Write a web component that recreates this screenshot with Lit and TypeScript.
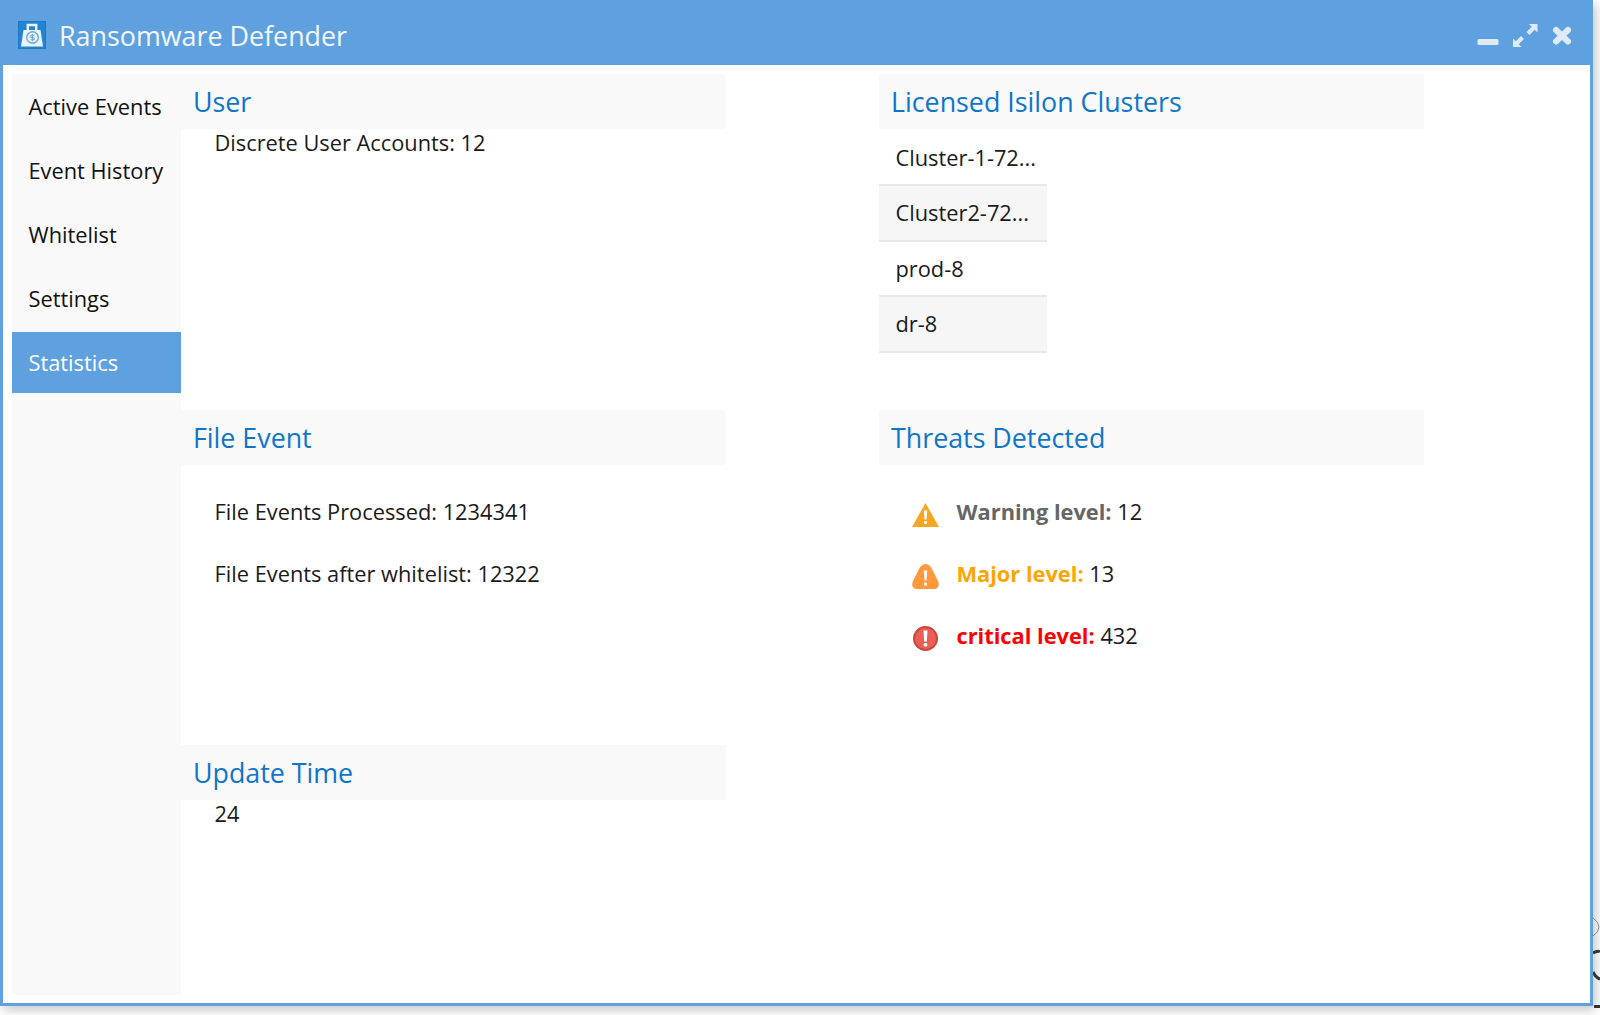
import { LitElement, html, css } from "lit";
import { customElement } from "lit/decorators.js";

@customElement("app-root")
export class AppRoot extends LitElement {
  static styles = css`
    :host { display: block; width: 1600px; height: 1015px; background: #fff; overflow: hidden; position: relative; font-family: "Open Sans", sans-serif; color: #1a1a1a; }
    * { box-sizing: border-box; }
    .window { width: 1593px; height: 1006px; border: 3px solid #5fa1df; border-top: 0; display: flex; flex-direction: column; background: #fff; box-shadow: 3px 4px 10px rgba(0,0,0,.22); }
    .titlebar { height: 65px; flex: none; margin: 0 -3px; background: #5fa1df; display: flex; align-items: center; padding: 5px 21px 0 18px; color: #fff; }
    .logo { width: 28px; height: 28px; display: block; }
    .title { margin: 2px 0 0 13px; font-size: 26.85px; color: #f2f7fc; line-height: 1; flex: 1; }
    .ctrls { display: flex; align-items: center; gap: 14px; }
    .ctrls svg { display: block; overflow: visible; }
    .body { flex: 1; display: flex; padding: 8.5px 0 8px 9px; min-height: 0; }
    .side { width: 169px; flex: none; background: #f9f9f9; padding-top: 2px; display: flex; flex-direction: column; gap: 3px; }
    .side div { height: 61px; padding: 1px 0 0 16.5px; display: flex; align-items: center; font-size: 21.8px; color: #111; }
    .side div.on { background: #5fa1df; color: #fff; }
    .grid { display: grid; grid-template-columns: 545px 545px; column-gap: 153px; grid-template-rows: 336px 335px 1fr; }
    .h { height: 55.5px; background: #f9f9f9; padding-left: 12px; font-size: 26.8px; line-height: 56.4px; color: #0f75c9; }
    .line { font-size: 21.8px; padding-left: 33.5px; color: #1a1a1a; line-height: 30px; }
    .top { margin-top: -1px; }
    .lines { padding-top: 32px; display: flex; flex-direction: column; gap: 32px; }
    .lines.threats { gap: 32.2px; }
    .clusters { width: 168px; padding-top: 1.5px; }
    .clusters div { height: 53.5px; padding-left: 16.5px; font-size: 21.8px; line-height: 54px; color: #1a1a1a; }
    .clusters div:nth-child(even) { height: 57.5px; background: #f6f6f6; border-top: 2px solid #e8e8e8; border-bottom: 2px solid #e8e8e8; line-height: 54px; }
    .threat { display: flex; align-items: center; height: 30px; padding-left: 32.5px; font-size: 21.8px; line-height: 30px; }
    .threat svg { width: 27px; height: 27px; margin-right: 18px; margin-top: 5px; flex: none; }
    .threat b { font-weight: 700; }
    .w { color: #666; } .m { color: #ffa500; } .c { color: #f00; }
    .edge { position: absolute; right: 0; top: 900px; }
  `;

  render() {
    const nav = ["Active Events", "Event History", "Whitelist", "Settings", "Statistics"];
    const clusters = ["Cluster-1-72...", "Cluster2-72...", "prod-8", "dr-8"];
    return html`
      <div class="window">
        <div class="titlebar">
          <svg class="logo" viewBox="0 0 28 28">
            <rect width="28" height="28" fill="#2584d0"/>
            <rect x=".5" y=".5" width="27" height="27" fill="none" stroke="#1a78c6"/>
            <path d="M5.5 9H22.5L25 25.5H3Z" fill="#eaf3fb"/>
            <path d="M9.8 10V4H18.2V10" fill="none" stroke="#eaf3fb" stroke-width="2.4"/>
            <circle cx="14.5" cy="16.5" r="5.8" fill="none" stroke="#6fa8d8" stroke-width="1.4"/>
            <path d="M16.5 14.3H13.6Q12.6 14.3 12.6 15.5Q12.6 16.5 14.5 16.5Q16.4 16.5 16.4 17.7Q16.4 18.8 15.2 18.8H12.5M14.5 13V20" fill="none" stroke="#6fa8d8" stroke-width="1.1"/>
          </svg>
          <div class="title">Ransomware Defender</div>
          <div class="ctrls">
            <svg width="22" height="24" viewBox="0 0 22 24"><rect x="0.5" y="16" width="21" height="6" rx="1.5" fill="#deebf7"/></svg>
            <svg width="25" height="24" viewBox="0 -1 25 24"><path d="M16 0H24.5V8.5L21.7 5.7L16.5 11L13.5 8L18.8 2.8ZM8.5 23H0V14.5L2.8 17.3L8 12L11 15L5.7 20.2Z" fill="#deebf7"/></svg>
            <svg width="20" height="20" viewBox="0 0 20 20"><path d="M4 5L16 16.5M16 5L4 16.5" stroke="#deebf7" stroke-width="6" stroke-linecap="round"/></svg>
          </div>
        </div>
        <div class="body">
          <div class="side">
            ${nav.map((n) => html`<div class=${n === "Statistics" ? "on" : ""}>${n}</div>`)}
          </div>
          <div class="grid">
            <section>
              <div class="h">User</div>
              <div class="line top">Discrete User Accounts: 12</div>
            </section>
            <section>
              <div class="h">Licensed Isilon Clusters</div>
              <div class="clusters">${clusters.map((c) => html`<div>${c}</div>`)}</div>
            </section>
            <section>
              <div class="h">File Event</div>
              <div class="lines">
                <div class="line">File Events Processed: 1234341</div>
                <div class="line">File Events after whitelist: 12322</div>
              </div>
            </section>
            <section>
              <div class="h">Threats Detected</div>
              <div class="lines threats">
                <div class="threat">
                  <svg viewBox="0 0 27 27"><path d="M13.5 2L27 26H0Z" fill="#f5a623"/><path d="M11.8 9.5H15.2L14.5 18.5H12.5Z" fill="#fff"/><rect x="12" y="20" width="3" height="3" rx="1" fill="#fff"/></svg>
                  <span><b class="w">Warning level:</b> 12</span>
                </div>
                <div class="threat">
                  <svg viewBox="0 0 27 27"><path d="M13.5 1C17 1 19 4 21 8L26 18C28 23 26 26 22 26H5C1 26 -1 23 1 18L6 8C8 4 10 1 13.5 1Z" fill="#ff9a3c"/><path d="M11.8 7.5H15.2L14.5 17.5H12.5Z" fill="#fff"/><rect x="12" y="19.5" width="3" height="3" rx="1" fill="#fff"/></svg>
                  <span><b class="m">Major level:</b> 13</span>
                </div>
                <div class="threat">
                  <svg viewBox="0 0 27 27"><circle cx="13.5" cy="13.5" r="12.5" fill="#c9463f"/><circle cx="13.5" cy="13.5" r="10.5" fill="#ea5f55"/><path d="M11.5 5.5H15.5L14.8 16.5H12.2Z" fill="#fff"/><rect x="11.8" y="18" width="3.4" height="3.4" rx="1.2" fill="#fff"/></svg>
                  <span><b class="c">critical level:</b> 432</span>
                </div>
              </div>
            </section>
            <section>
              <div class="h">Update Time</div>
              <div class="line top">24</div>
            </section>
          </div>
        </div>
      </div>
      <svg class="edge" width="7" height="115" viewBox="0 0 7 115">
        <path d="M0 18Q6 22 6 27Q6 32 0 36" fill="none" stroke="#888" stroke-width="1"/>
        <path d="M0 53Q5 50 7 52M0 72Q3 78 7 79" fill="none" stroke="#333" stroke-width="3"/>
        <rect x="1" y="105" width="6" height="3" fill="#333"/>
      </svg>
    `;
  }
}
